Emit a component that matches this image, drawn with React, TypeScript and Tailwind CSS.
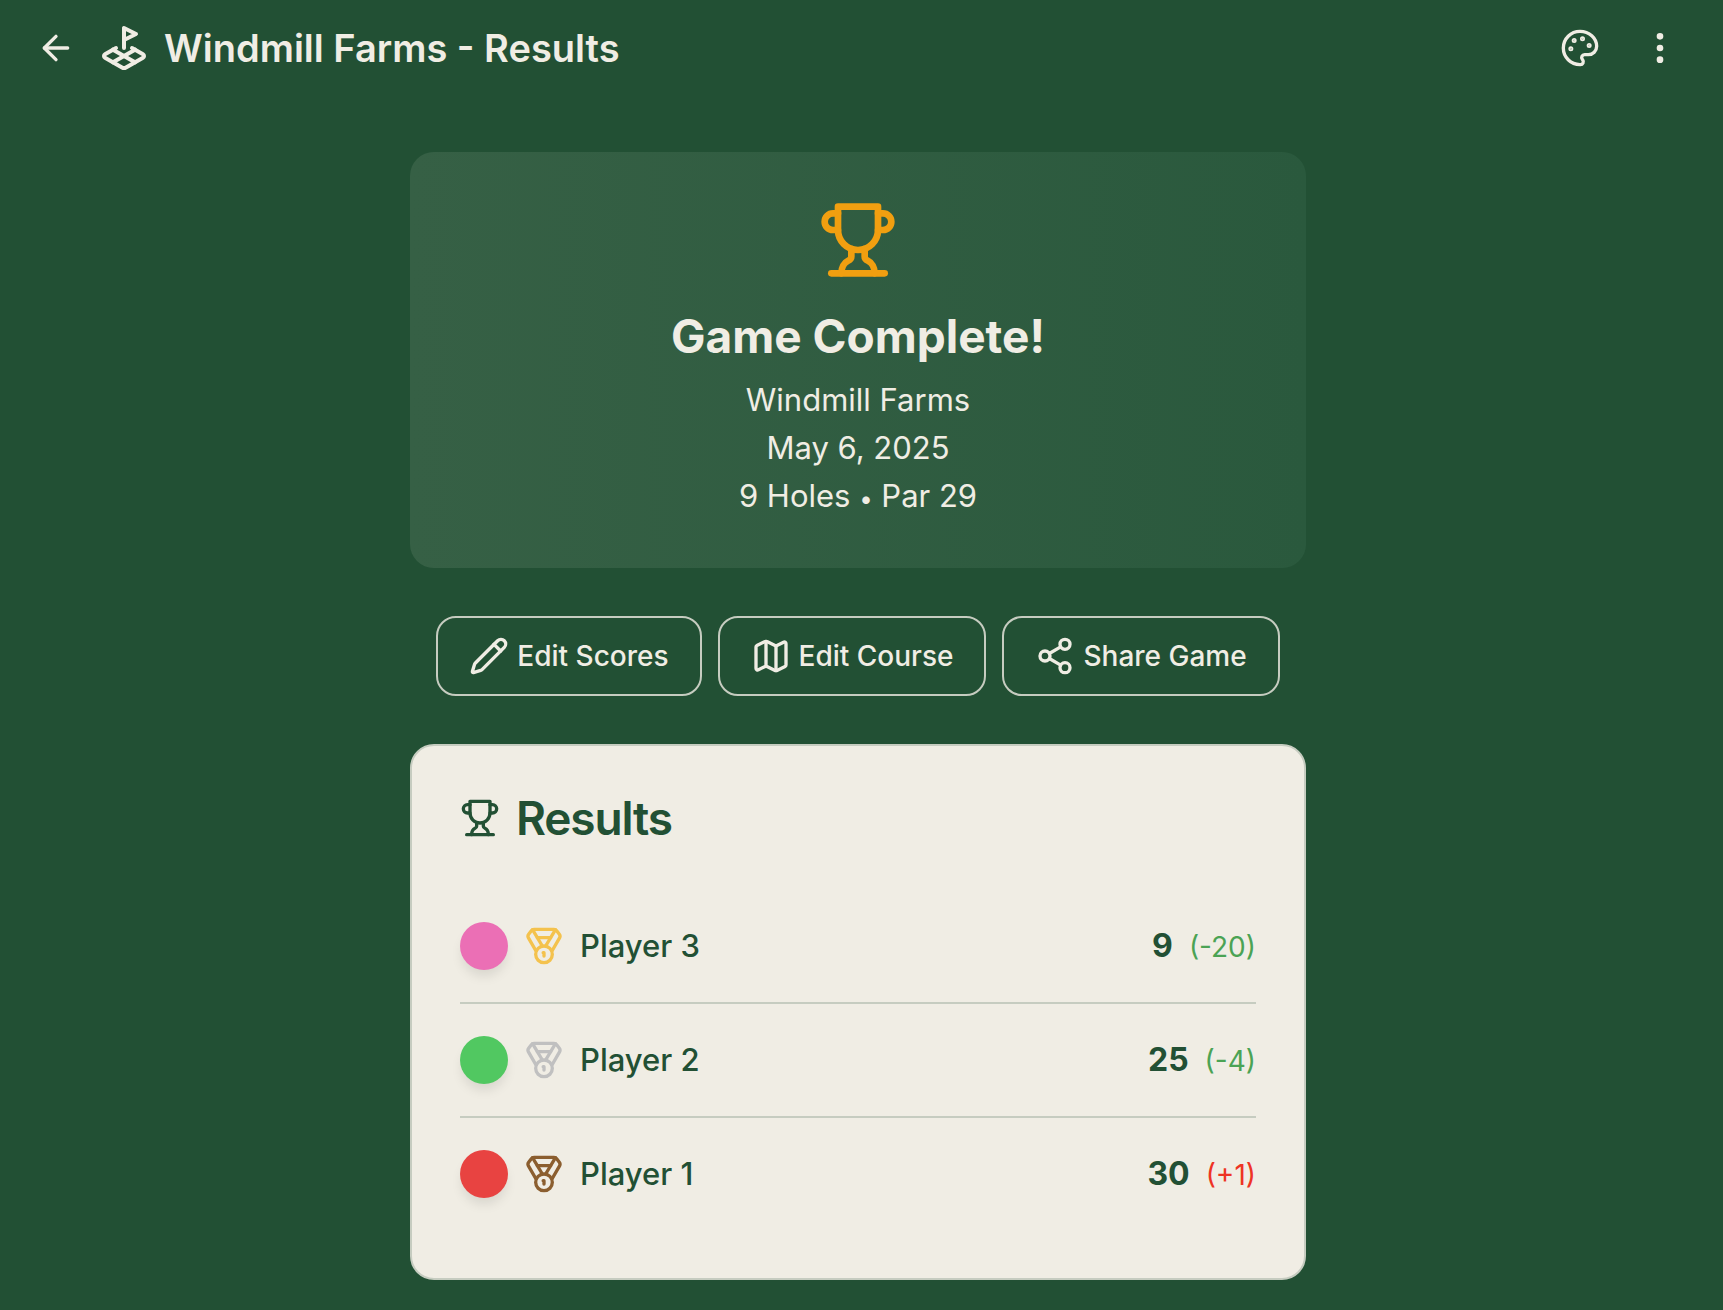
import React from 'react';
import {
  ArrowLeft,
  EllipsisVertical,
  LandPlot,
  Map,
  Medal,
  Palette,
  Pencil,
  Share2,
} from 'lucide-react';

interface PlayerResult {
  id: number;
  name: string;
  ball: string;
  medal: string;
  score: number;
  toPar: number;
}

const PLAYERS: PlayerResult[] = [
  { id: 3, name: 'Player 3', ball: 'bg-[#eb6fb5]', medal: 'text-[#f4c24d]', score: 9, toPar: -20 },
  { id: 2, name: 'Player 2', ball: 'bg-[#51c861]', medal: 'text-[#c0c0c0]', score: 25, toPar: -4 },
  { id: 1, name: 'Player 1', ball: 'bg-[#e84341]', medal: 'text-[#8b5e2f]', score: 30, toPar: 1 },
];

const ACTIONS = [
  { label: 'Edit Scores', icon: Pencil },
  { label: 'Edit Course', icon: Map },
  { label: 'Share Game', icon: Share2 },
];

// Square-rimmed cup
const Trophy: React.FC<{ className: string }> = ({ className }) => (
  <svg
    viewBox="0 0 24 24"
    fill="none"
    stroke="currentColor"
    strokeWidth={2}
    strokeLinecap="round"
    strokeLinejoin="round"
    aria-hidden="true"
    className={className}
  >
    <path d="M6 9H4.5a2.5 2.5 0 0 1 0-5H6" />
    <path d="M18 9h1.5a2.5 2.5 0 0 0 0-5H18" />
    <path d="M4 22h16" />
    <path d="M10 14.66V17c0 .55-.47.98-.97 1.21C7.85 18.75 7 20.24 7 22" />
    <path d="M14 14.66V17c0 .55.47.98.97 1.21C16.15 18.75 17 20.24 17 22" />
    <path d="M18 2H6v7a6 6 0 0 0 12 0V2Z" />
  </svg>
);

const Header: React.FC = () => (
  <header className="flex items-center justify-between px-4 py-2">
    <div className="flex items-center gap-1">
      <button type="button" aria-label="Back" className="flex size-20 items-center justify-center rounded-2xl">
        <ArrowLeft size={40} />
      </button>
      <div className="flex items-center gap-4">
        <LandPlot size={48} />
        <h1 className="text-[38px] leading-[56px] font-semibold whitespace-nowrap">Windmill Farms - Results</h1>
      </div>
    </div>
    <div className="flex items-center">
      <button type="button" aria-label="Theme" className="flex size-20 items-center justify-center rounded-2xl">
        <Palette size={40} />
      </button>
      <button type="button" aria-label="Menu" className="flex size-20 items-center justify-center rounded-2xl">
        <EllipsisVertical size={40} />
      </button>
    </div>
  </header>
);

const Summary: React.FC = () => (
  <section className="flex flex-col items-center rounded-3xl bg-linear-to-r from-[#366045] to-[#2a593d] p-12 text-center">
    <Trophy className="mb-6 size-20 text-[#f19f10]" />
    <h2 className="mb-2 text-[46px] leading-[64px] font-bold">Game Complete!</h2>
    <p className="text-[31px] leading-[48px]">Windmill Farms</p>
    <p className="text-[31px] leading-[48px]">May 6, 2025</p>
    <p className="text-[31px] leading-[48px]">
      9 Holes <span className="text-2xl leading-none">•</span> Par 29
    </p>
  </section>
);

const ResultRow: React.FC<{ player: PlayerResult }> = ({ player }) => (
  <li className="flex items-center justify-between py-8">
    <div className="flex items-center gap-4">
      <span className={`size-12 rounded-full shadow-[0_8px_12px_-2px_rgba(0,0,0,0.1)] ${player.ball}`} />
      <Medal size={40} className={player.medal} />
      <span className="text-[31px] leading-[48px] font-medium">{player.name}</span>
    </div>
    <div className="flex items-baseline gap-4">
      <span className="text-[32px] leading-[48px] font-bold">{player.score}</span>
      <span className={`text-[28px] leading-10 ${player.toPar > 0 ? 'text-[#ee3424]' : 'text-[#4ba354]'}`}>
        ({player.toPar > 0 ? `+${player.toPar}` : player.toPar})
      </span>
    </div>
  </li>
);

export default function App() {
  return (
    <div className="min-h-screen bg-[#225034] pr-[7px] font-['Inter',sans-serif] text-[#f0ede4]">
      <Header />
      <main className="mx-auto flex w-full max-w-[896px] flex-col gap-12 pt-14 pb-[30px]">
        <Summary />
        <div className="flex justify-center gap-4">
          {ACTIONS.map(({ label, icon: Icon }) => (
            <button
              key={label}
              type="button"
              className="flex h-20 items-center gap-2 rounded-[20px] border-2 border-[#c6ccc0] px-[31px] text-[28px] leading-10 font-medium whitespace-nowrap"
            >
              <Icon size={40} />
              {label}
            </button>
          ))}
        </div>
        <section className="rounded-3xl border-2 border-[#c6ccc0] bg-[#f0ede4] p-12 text-[#225034]">
          <h2 className="mb-12 flex items-center gap-4 text-[46px] leading-[48px] font-semibold tracking-tight">
            <Trophy className="size-10" />
            Results
          </h2>
          <ul className="divide-y-2 divide-[#c6ccc0]">
            {PLAYERS.map((player) => (
              <ResultRow key={player.id} player={player} />
            ))}
          </ul>
        </section>
      </main>
    </div>
  );
}
